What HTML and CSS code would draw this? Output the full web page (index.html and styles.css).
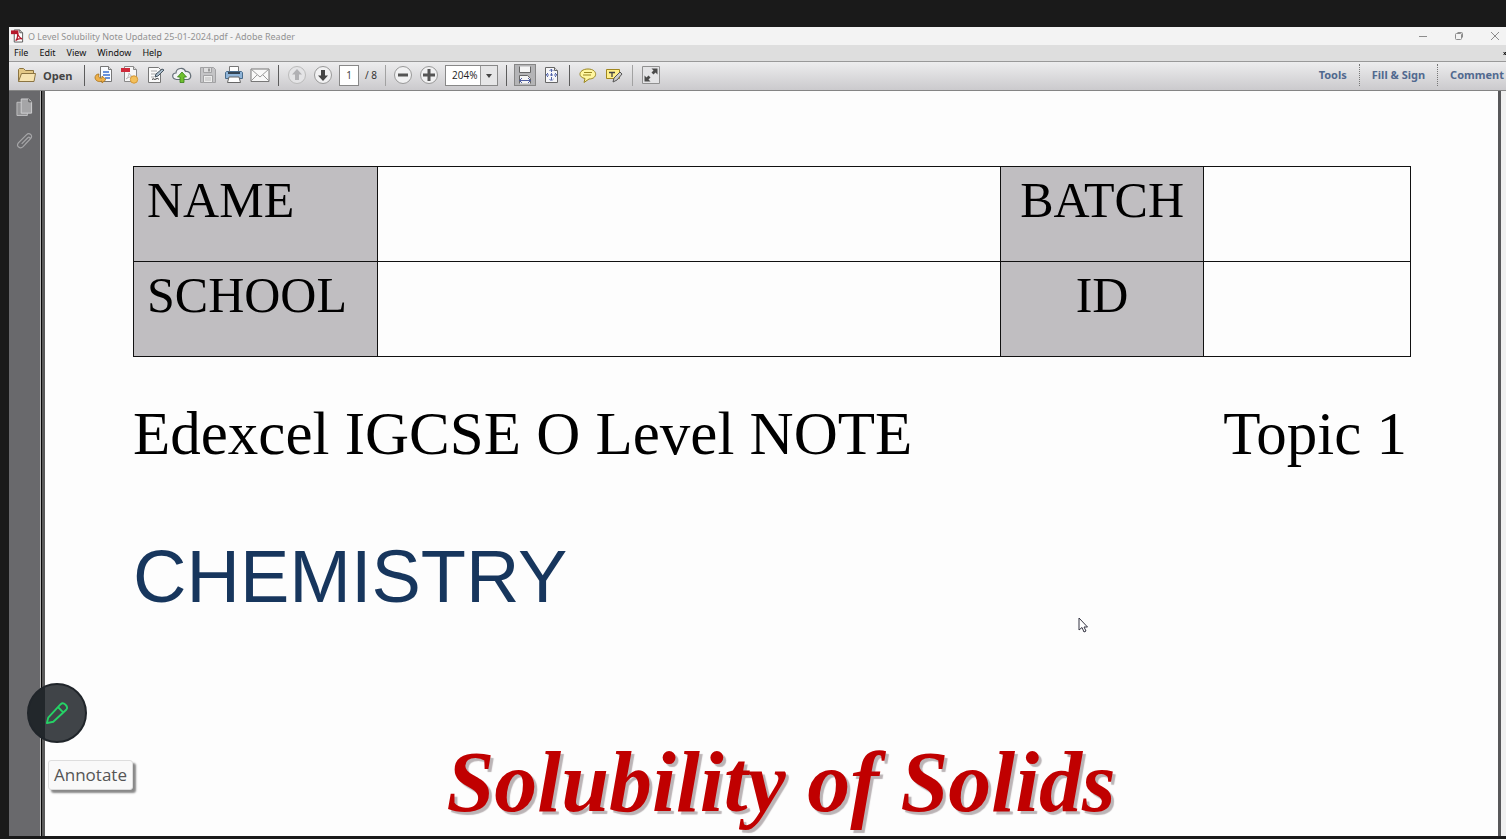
FILE: index.html
```html
<!DOCTYPE html>
<html lang="en">
<head>
<meta charset="utf-8">
<title>O Level Solubility Note Updated 25-01-2024.pdf - Adobe Reader</title>
<link rel="stylesheet" href="styles.css">
</head>
<body>
<div class="window">
  <header class="titlebar">
    <svg class="app-icon" viewBox="0 0 14 14"><path d="M3.500.5h6l3 3v10h-9z" fill="#fff" stroke="#555"/><path d="M9.500.5v3h3" fill="#ddd" stroke="#555"/><path d="M0 1h8v4H0z" fill="#b5182b"/><path d="M7 4c1 4 2 5 5 6-3-.5-5 0-7 2 2-2 2.500-4 2-8z" fill="none" stroke="#b5182b" stroke-width="1.300"/></svg>
    <span class="title">O Level Solubility Note Updated 25-01-2024.pdf - Adobe Reader</span>
    <div class="window-controls">
      <button aria-label="Minimize"><svg viewBox="0 0 10 10"><path d="M1 5.500h8"/></svg></button>
      <button aria-label="Restore"><svg viewBox="0 0 10 10"><rect x="1.500" y="2.500" width="6" height="6" rx="1"/><path d="M3.500 1.500h4a1 1 0 0 1 1 1v4"/></svg></button>
      <button aria-label="Close"><svg viewBox="0 0 10 10"><path d="M1 1l8 8M9 1L1 9"/></svg></button>
    </div>
  </header>
  <nav class="menubar">
    <button>File</button><button>Edit</button><button>View</button><button>Window</button><button>Help</button>
    <button class="close-doc" aria-label="Close document"><svg viewBox="0 0 5 7"><path d="M1 1l4 5M5 1L1 6" stroke="#000" stroke-width="1.600"/></svg></button>
  </nav>
  <div class="toolbar">
    <button class="open"><svg viewBox="0 0 20 18"><path d="M1.500 15.500v-12l1-1h4l2 2h8v3" fill="#e3c886" stroke="#8b7442"/><path d="M1.500 15.500l3-8h14l-1.500 8z" fill="#f6e3b0" stroke="#8b7442"/></svg>Open</button>
    <span class="sep"></span>
    <div class="group files">
      <button aria-label="Convert file"><svg viewBox="0 0 20 20"><path d="M6.500 1.500h8l3 3v12h-11z" fill="#fafcff" stroke="#777"/><path d="M14.500 1.500v3h3" fill="#ddd" stroke="#777"/><path d="M9 7h6M9 10h7M11 13h5" stroke="#3b6fd0" stroke-width="1.600"/><path d="M5 9C2 9 1 11 1 13c1 4 5 4 7 3v2l4-3.500L8 11v2c-3 .5-4-1-3-4z" fill="#eeb04a" stroke="#a97216" stroke-width=".8"/></svg></button>
      <button aria-label="Create PDF"><svg viewBox="0 0 20 20"><path d="M4.500 1.500h9l3 3v12h-12z" fill="#f7f7f7" stroke="#888"/><path d="M13.500 1.500v3h3" fill="#ddd" stroke="#888"/><path d="M1 3h9v4H1z" fill="#cf2939"/><path d="M6 14c2-2 3-3 3-6 1 3 3 3 6 4-4-1-6 0-9 2z" fill="none" stroke="#bbb"/><circle cx="14" cy="14.500" r="3.700" fill="#f3c05b" stroke="#d49838"/></svg></button>
      <button aria-label="Sign"><svg viewBox="0 0 20 20"><path d="M2.500 2.500h10l2 2v13h-12z" fill="#fafafa" stroke="#777"/><path d="M5 6h6M5 9h5M5 12h3" stroke="#aaa"/><path d="M6 14.500c2-2 2 1 4-.5s2 .5 3 0" fill="none" stroke="#333"/><path d="M9 12l1-3 6-5 2 1-6 6z" fill="#a9bccb" stroke="#46535e"/></svg></button>
      <button aria-label="Upload to cloud"><svg viewBox="0 0 20 20"><path d="M4.500 14.500C-.5 14-.5 8 4 8c0-5 8-6.500 9.500-1.500C19 6 20.500 13 16 14.500z" fill="#f2f3f5" stroke="#667078" stroke-width="1.200"/><path d="M10 7l4.500 5H12v5.500H8V12H5.500z" fill="#6fc02f" stroke="#378018" stroke-width=".8"/></svg></button>
      <button aria-label="Save" disabled><svg viewBox="0 0 20 20"><path d="M2.500 2.500h13l2 2v13h-15z" fill="#c4c4c6" stroke="#a2a2a4"/><path d="M5.500 2.500h8v5h-8z" fill="#dededf" stroke="#a2a2a4"/><path d="M11 3.500v3" stroke="#999" stroke-width="2"/><path d="M5.500 10.500h9v7h-9z" fill="#ececec" stroke="#a2a2a4"/><path d="M7 13h6M7 15h6" stroke="#bbb"/></svg></button>
      <button aria-label="Print"><svg viewBox="0 0 20 20"><path d="M5.500 1.500h9v6h-9z" fill="#fff" stroke="#777"/><path d="M1.500 7.500l1-1h15l1 1v6h-17z" fill="#8fb4d8" stroke="#4a6c8c"/><path d="M4 7h12v2H4z" fill="#354554"/><path d="M5 12h10l1.500 5.500h-13z" fill="#fff" stroke="#666"/></svg></button>
      <button aria-label="Email"><svg viewBox="0 0 20 20"><path d="M1 4h18v12.500H1z" fill="#f8f8f8" stroke="#777"/><path d="M1 4l9 8 9-8M1 16l6-6M19 16l-6-6" fill="none" stroke="#999"/></svg></button>
    </div>
    <span class="sep"></span>
    <div class="group">
      <button aria-label="Previous page" disabled><svg viewBox="0 0 20 20"><circle cx="10" cy="10" r="8.500" fill="#e4e4e6" stroke="#bbb"/><path d="M10 4l5 5.500h-3V15H8V9.500H5z" fill="#b1b1b4"/></svg></button>
      <button aria-label="Next page"><svg viewBox="0 0 20 20"><circle cx="10" cy="10" r="8.500" fill="#f1f1f2" stroke="#999"/><path d="M10 16l5-5.500h-3V5H8v5.500H5z" fill="#444"/></svg></button>
      <input class="page-number" aria-label="Page number" value="1">
      <span class="page-total">/ 8</span>
    </div>
    <span class="sep light"></span>
    <div class="group zoom-group">
      <button aria-label="Zoom out"><svg viewBox="0 0 20 20"><circle cx="10" cy="10" r="8.500" fill="#f1f1f2" stroke="#999"/><path d="M5 8.500h10v3H5z" fill="#555"/></svg></button>
      <button aria-label="Zoom in"><svg viewBox="0 0 20 20"><circle cx="10" cy="10" r="8.500" fill="#f1f1f2" stroke="#999"/><path d="M4 8.500h4.500V4h3v4.500H16v3h-4.500V16h-3v-4.500H4z" fill="#555"/></svg></button>
      <div class="zoom">
        <select aria-label="Zoom level"><option>204%</option></select>
        <svg viewBox="0 0 17 19"><path d="M.5 0v19" stroke="#999"/><path d="M6 8h6l-3 4z" fill="#444"/></svg>
      </div>
    </div>
    <span class="sep"></span>
    <div class="group">
      <button class="pressed" aria-label="Fit width"><svg viewBox="0 0 20 20"><path d="M4.500 1.500v6h11v-6" fill="#f5f5f5" stroke="#666"/><path d="M4.500 18.500v-8h8l3 3v5" fill="#f5f5f5" stroke="#666"/><path d="M5 15.500h10M7 13l-2.500 2.500L7 18M13 13l2.500 2.500L13 18" fill="none" stroke="#4e5da0"/></svg></button>
      <button aria-label="Fit page"><svg viewBox="0 0 20 20"><path d="M4.500 2.500h9l3 3v12h-12z" fill="#f7f7f9" stroke="#666"/><path d="M13.500 2.500v3h3" fill="#ddd" stroke="#666"/><path d="M10.500 4v12M5 10h11M8.500 6l2-2 2 2M8.500 14l2 2 2-2M7 8l-2 2 2 2M14 8l2 2-2 2" fill="none" stroke="#5365ab" stroke-dasharray="3 1"/></svg></button>
    </div>
    <span class="sep"></span>
    <div class="group">
      <button aria-label="Add comment"><svg viewBox="0 0 20 20"><path d="M10 4c10 0 10 10 1 10l-5 3.500 1-4C-1 12 1 4 10 4z" fill="#fff6a0" stroke="#9a8620"/><path d="M6 7.500h8M5 10h8" stroke="#9a8620"/></svg></button>
      <button aria-label="Highlight text"><svg viewBox="0 0 20 20"><path d="M2.500 4.500h13v9h-13z" fill="#fff08a" stroke="#a08620"/><path d="M5 7.500h6M8 7.500V12" stroke="#444" stroke-width="1.300"/><path d="M9 17l1-4 6-6 2 2-5 6z" fill="#ccc" stroke="#555"/></svg></button>
    </div>
    <span class="sep light"></span>
    <button aria-label="Full screen"><svg viewBox="0 0 20 20"><path d="M1.500 1.500h17v17h-17z" fill="#e4e4e6" stroke="#909090"/><path d="M16.500 3.500v6l-2-2-2 2-2-2 2-2-2-2zM3.500 16.500v-6l2 2 2-2 2 2-2 2 2 2z" fill="#4a4a4a"/></svg></button>
    <div class="panels"><button>Tools</button><button>Fill &amp; Sign</button><button>Comment</button></div>
  </div>
  <div class="workspace">
    <aside class="sidebar">
      <button aria-label="Page thumbnails"><svg viewBox="0 0 18 20"><path d="M1 5h11v14H1z" fill="#939395" stroke="#c0c0c2"/><path d="M5.500 1.500h8l3 3v12h-11z" fill="#a5a5a7" stroke="#d0d0d2"/><path d="M13.500 1.500v3h3" fill="none" stroke="#555"/></svg></button>
      <button aria-label="Attachments"><svg viewBox="0 0 18 20"><path d="M6 13l6.500-6.500c1.500-1.500 3.500.5 2 2L7.500 16C4.500 19-.5 15.500 2.500 12L11 3.500c3-3 7.500.5 4.500 4L10 13" fill="none" stroke="#a6a6a8" stroke-width="1.300"/></svg></button>
    </aside>
    <main class="page">
      <table class="details">
        <colgroup><col class="col-label"><col class="col-wide"><col class="col-short"><col></colgroup>
        <tr><th>NAME</th><td></td><th class="centered">BATCH</th><td></td></tr>
        <tr><th>SCHOOL</th><td></td><th class="centered">ID</th><td></td></tr>
      </table>
      <div class="course"><span>Edexcel IGCSE O Level NOTE</span><span>Topic 1</span></div>
      <h1 class="subject">CHEMISTRY</h1>
      <h2 class="topic">Solubility of Solids</h2>
    </main>
  </div>
</div>
<button class="annotate" aria-label="Annotate"><svg viewBox="0 0 26 26"><path d="M2 24l1.500-6L17 3.500c3-3 9 2.500 6 6L9 22.500z M14 6.500l6 6" fill="none" stroke="#25d366" stroke-width="2" stroke-linejoin="round"/></svg></button>
<div class="tooltip" role="tooltip">Annotate</div>
<svg class="cursor" viewBox="0 0 10 16"><path d="M1 1v12l3-2.500 2 4.500 2-1-2-4h3.500z" fill="#fff" stroke="#343442"/></svg>
</body>
</html>
```
FILE: styles.css
```css
* { box-sizing: border-box; }
body {
  margin: 0;
  height: 100vh;
  padding: 27px 0 3px 9px;
  background: #1a1a1a;
  font-family: "Noto Sans", sans-serif;
  overflow: hidden;
}
button { border: 0; padding: 0; background: none; font: inherit; color: inherit; }
svg { display: block; }
.window { height: 100%; display: flex; flex-direction: column; background: #f0f0f0; overflow: hidden; }
.titlebar { height: 18px; flex: none; display: flex; align-items: center; padding: 0 6px 0 2px; background: #f3f3f3; }
.app-icon { width: 13px; height: 14px; }
.title { margin-left: 4px; font-size: 9px; color: #929292; white-space: nowrap; }
.window-controls { margin-left: auto; display: flex; gap: 26px; }
.window-controls svg { width: 10px; height: 10px; fill: none; stroke: #8c8c8c; }
.menubar { height: 16px; flex: none; display: flex; align-items: center; gap: 11px; padding-left: 5px; background: #dedede; font-size: 9px; line-height: 16px; color: #111; }
.close-doc { margin-left: auto; }
.close-doc svg { width: 3px; height: 7px; }
.toolbar {
  height: 30px;
  flex: none;
  display: flex;
  align-items: center;
  padding: 0 2px 2px 8px;
  border-top: 1px solid #999;
  border-bottom: 1px solid #858585;
  background: linear-gradient(#ededee, #cbcacd);
}
.toolbar svg { width: 20px; height: 20px; }
.open { width: 59px; display: flex; align-items: center; gap: 6px; font: 700 11px "Open Sans", sans-serif; color: #444; }
.toolbar .open svg { height: 18px; }
.sep { width: 1px; height: 21px; margin: 0 8px; background: #5c5c5c; flex: none; }
.sep.light { background: #a2a2a2; }
.group { display: flex; align-items: center; gap: 6px; }
.files { padding-left: 1px; }
.page-number { width: 20px; height: 21px; padding: 0; border: 1px solid #888; background: #fff; font: 10px "Noto Sans", sans-serif; color: #444; text-align: center; }
.page-total { width: 12px; font-size: 10px; color: #333; white-space: nowrap; }
.zoom { position: relative; width: 53px; height: 21px; border: 1px solid #888; background: #fff; }
.zoom-group { margin-left: -1px; }
.zoom select { display: block; appearance: none; width: 100%; height: 19px; border: 0; padding: 0 0 0 6px; background: #fff; font: 10px "Open Sans", sans-serif; color: #222; }
.toolbar .zoom svg { position: absolute; right: 0; top: 0; width: 17px; height: 19px; background: #e6e6e7; pointer-events: none; }
.pressed { outline: 1px solid #868686; background: #b4b4b6; }
.panels { margin-left: auto; display: flex; font-size: 11px; line-height: 22px; font-weight: 700; color: #51698f; }
.panels button { padding: 0 12px; border-left: 1px dotted #777; white-space: nowrap; }
.panels button:first-child { border-left: 0; }
.panels button:last-child { padding-right: 0; }
.workspace { flex: 1; min-height: 0; display: flex; overflow: hidden; }
.sidebar { width: 36px; flex: none; display: flex; flex-direction: column; align-items: flex-start; gap: 14px; padding: 6px 0 0 7px; background: linear-gradient(90deg, #69696c 31px, #bbb 31px 32px, #080808 32px 33px, #5a5a5a 33px); }
.sidebar svg { width: 17px; height: 20px; }
.page { flex: 1; min-width: 0; margin-right: 5px; padding: 75px 87px 0 88px; border-right: 3px solid #58585a; background: #fdfdfd; font-family: "Liberation Serif", serif; color: #000; }
.details { width: 100%; table-layout: fixed; border-collapse: collapse; }
.col-label { width: 19.1%; }
.col-wide { width: 48.8%; }
.col-short { width: 15.9%; }
.details th, .details td { height: 95px; border: 1px solid #111; padding: 0 13px; vertical-align: top; }
.details th { background: #c0bec1; font-size: 50px; line-height: 66px; font-weight: 400; text-align: left; }
.details .centered { text-align: center; }
.course { display: flex; justify-content: space-between; margin-top: 41px; padding-right: 4px; font-size: 61px; line-height: 72px; white-space: nowrap; }
.subject { margin: 63px 0 0; font: 400 74px/88px "Liberation Sans", sans-serif; color: #17365d; }
.topic { margin: 111px 0 0; padding-left: 18px; font: italic 700 86px/100px "Liberation Serif", serif; color: #c00000; text-align: center; white-space: nowrap; text-shadow: 3px 3px 1px #bbb4b6; }
.annotate { position: absolute; left: 27px; bottom: 96px; width: 60px; height: 60px; border: 2px solid #20252a; border-radius: 50%; background: linear-gradient(90deg, #22272b 16px, #404448 16px); display: grid; place-items: center; }
.annotate svg { width: 24px; height: 24px; }
.tooltip { position: absolute; left: 48px; bottom: 49px; padding: 0 5px; border: 1px solid #ddd; border-radius: 3px; background: #f9f9f9; box-shadow: 3px 3px 2px #888; font: 17px/28px "Open Sans", sans-serif; color: #555; }
.cursor { position: absolute; left: 1078px; top: 617px; width: 10px; height: 16px; }
```
